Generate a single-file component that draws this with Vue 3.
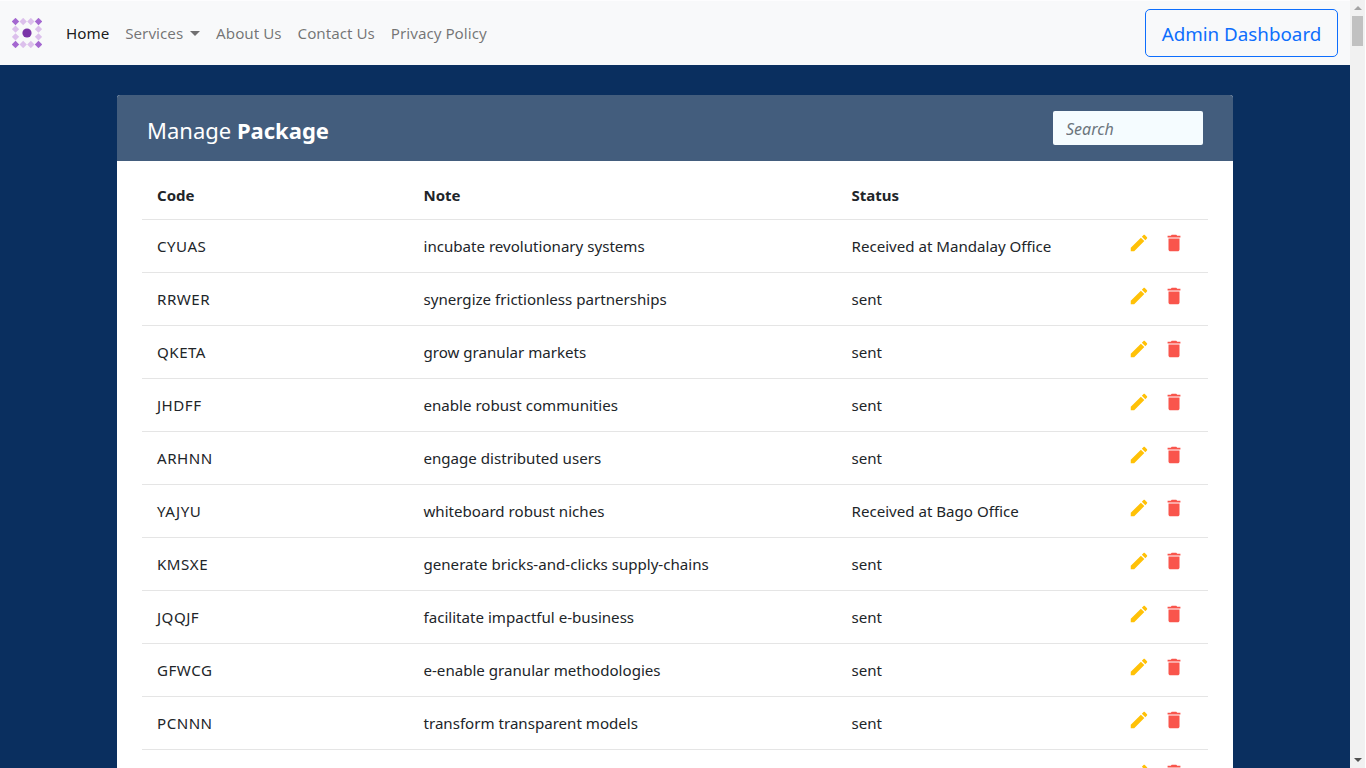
<template>
  <div class="page">
    <div class="main">
      <nav class="navbar">
        <svg class="logo" width="30" height="30" viewBox="0 0 30 30">
          <rect
            v-for="(d, i) in dots"
            :key="i"
            :x="d.x - 2.6"
            :y="d.y - 2.6"
            width="5.2"
            height="5.2"
            :fill="d.corner ? '#a468d0' : '#dcc0ec'"
            :transform="`rotate(45 ${d.x} ${d.y})`"
          />
          <circle cx="15" cy="15" r="4.6" fill="#7a35a8" />
        </svg>
        <ul class="links">
          <li class="active">Home</li>
          <li>Services <span class="caret"></span></li>
          <li>About Us</li>
          <li>Contact Us</li>
          <li>Privacy Policy</li>
        </ul>
        <button class="admin">Admin Dashboard</button>
      </nav>

      <div class="content">
        <section class="card">
          <header class="card-head">
            <h2>Manage <b>Package</b></h2>
            <input class="search" type="text" placeholder="Search" />
          </header>
          <div class="table-wrap">
            <table>
              <thead>
                <tr>
                  <th class="c-code">Code</th>
                  <th class="c-note">Note</th>
                  <th class="c-status">Status</th>
                  <th></th>
                </tr>
              </thead>
              <tbody>
                <tr v-for="(p, i) in packages" :key="i">
                  <td class="code">{{ p.code }}</td>
                  <td>{{ p.note }}</td>
                  <td>{{ p.status }}</td>
                  <td>
                    <div class="actions">
                      <svg class="edit" viewBox="0 0 24 24">
                        <path d="M3 17.25V21h3.75L17.81 9.94l-3.75-3.75L3 17.25zM20.71 7.04c.39-.39.39-1.02 0-1.41l-2.34-2.34c-.39-.39-1.02-.39-1.41 0l-1.83 1.83 3.75 3.75 1.83-1.83z" />
                      </svg>
                      <svg class="delete" viewBox="0 0 24 24">
                        <path d="M6 19c0 1.1.9 2 2 2h8c1.1 0 2-.9 2-2V7H6v12zM19 4h-3.5l-1-1h-5l-1 1H5v2h14V4z" />
                      </svg>
                    </div>
                  </td>
                </tr>
              </tbody>
            </table>
          </div>
        </section>
      </div>
    </div>

    <aside class="scrollbar">
      <span class="arrow up"></span>
      <span class="thumb"></span>
      <span class="arrow down"></span>
    </aside>
  </div>
</template>

<script setup>
const dots = []
for (let r = 0; r < 4; r++) {
  for (let c = 0; c < 4; c++) {
    if ((r === 1 || r === 2) && (c === 1 || c === 2)) continue
    dots.push({
      x: 3.5 + c * 7.67,
      y: 3.5 + r * 7.67,
      corner: (r === 0 || r === 3) && (c === 0 || c === 3)
    })
  }
}

// last row only shows its icons above the fold
const packages = [
  { code: 'CYUAS', note: 'incubate revolutionary systems', status: 'Received at Mandalay Office' },
  { code: 'RRWER', note: 'synergize frictionless partnerships', status: 'sent' },
  { code: 'QKETA', note: 'grow granular markets', status: 'sent' },
  { code: 'JHDFF', note: 'enable robust communities', status: 'sent' },
  { code: 'ARHNN', note: 'engage distributed users', status: 'sent' },
  { code: 'YAJYU', note: 'whiteboard robust niches', status: 'Received at Bago Office' },
  { code: 'KMSXE', note: 'generate bricks-and-clicks supply-chains', status: 'sent' },
  { code: 'JQQJF', note: 'facilitate impactful e-business', status: 'sent' },
  { code: 'GFWCG', note: 'e-enable granular methodologies', status: 'sent' },
  { code: 'PCNNN', note: 'transform transparent models', status: 'sent' },
  { code: '', note: '', status: '' }
]
</script>

<style>
html, body { margin: 0; height: 100%; overflow: hidden; background: #fff; }
</style>

<style scoped>
.page {
  display: flex;
  width: 1365px;
  height: 768px;
  overflow: hidden;
  font-family: "Noto Sans", "Open Sans", sans-serif;
  font-size: 15.2px;
  color: #212529;
}
.main { flex: 1; min-width: 0; display: flex; flex-direction: column; background: #0a2f5f; }

.navbar {
  display: flex;
  align-items: center;
  height: 65px;
  flex: none;
  padding: 0 12px;
  background: #f8f9fa;
  border-top: 1px solid #fdfdfe;
  box-sizing: border-box;
}
.logo { flex: none; margin-right: 24px; }
.links { display: flex; gap: 16px; list-style: none; margin: 0 0 1px; padding: 0; color: rgba(0, 0, 0, 0.55); }
.links .active { color: rgba(0, 0, 0, 0.9); }
.caret {
  display: inline-block;
  margin-left: 3px;
  vertical-align: 3px;
  border-top: 5px solid;
  border-left: 5px solid transparent;
  border-right: 5px solid transparent;
}
.admin {
  margin-left: auto;
  height: 48px;
  width: 193px;
  padding: 2px 0 0;
  background: transparent;
  border: 1px solid #0d6efd;
  border-radius: 5px;
  color: #0d6efd;
  font: inherit;
  font-size: 18.8px;
}

.content { flex: 1; min-height: 0; padding: 30px 117px 0; }
.card { background: #fff; border-radius: 3px 3px 0 0; }
.card-head {
  display: flex;
  align-items: center;
  justify-content: space-between;
  height: 66px;
  padding: 0 30px;
  background: #435d7d;
  border-radius: 3px 3px 0 0;
  color: #fff;
}
.card-head h2 { margin: 4px 0 0; font-size: 22px; font-weight: 400; }
.card-head b { font-weight: 700; }
.search {
  width: 150px;
  height: 34px;
  box-sizing: border-box;
  padding: 2px 13px 0;
  border: none;
  border-radius: 2px;
  background: #f5fcff;
  font: italic 16px "Noto Sans", sans-serif;
}
.search::placeholder { color: #6c757d; opacity: 1; }

.table-wrap { padding: 0 25px; }
table { width: 100%; border-collapse: collapse; table-layout: fixed; }
th, td { padding: 0 15px; text-align: left; border-bottom: 1px solid #e5e5e5; font-size: 15.1px; }
th { height: 58px; padding-top: 10px; font-size: 15px; font-weight: 700; box-sizing: border-box; }
td { height: 53px; box-sizing: border-box; }
td.code { letter-spacing: 0.5px; }
.c-code { width: 266.5px; box-sizing: border-box; }
.c-note { width: 428px; box-sizing: border-box; }
.c-status { width: 271.5px; box-sizing: border-box; }

.actions { display: flex; gap: 13px; margin: 0 0 6px 5px; }
.actions svg { width: 22px; height: 22px; flex: none; }
.edit { fill: #ffc107; }
.delete { fill: #f9554c; }

.scrollbar {
  position: relative;
  flex: none;
  width: 15px;
  background: #f1f1f1;
}
.thumb { position: absolute; top: 16px; left: 2px; width: 11px; height: 30px; background: #c1c1c1; }
.arrow { position: absolute; left: 4px; border-left: 4px solid transparent; border-right: 4px solid transparent; }
.arrow.up { top: 6px; border-bottom: 4px solid #a3a3a3; }
.arrow.down { bottom: 6px; border-top: 4px solid #505050; }
</style>
